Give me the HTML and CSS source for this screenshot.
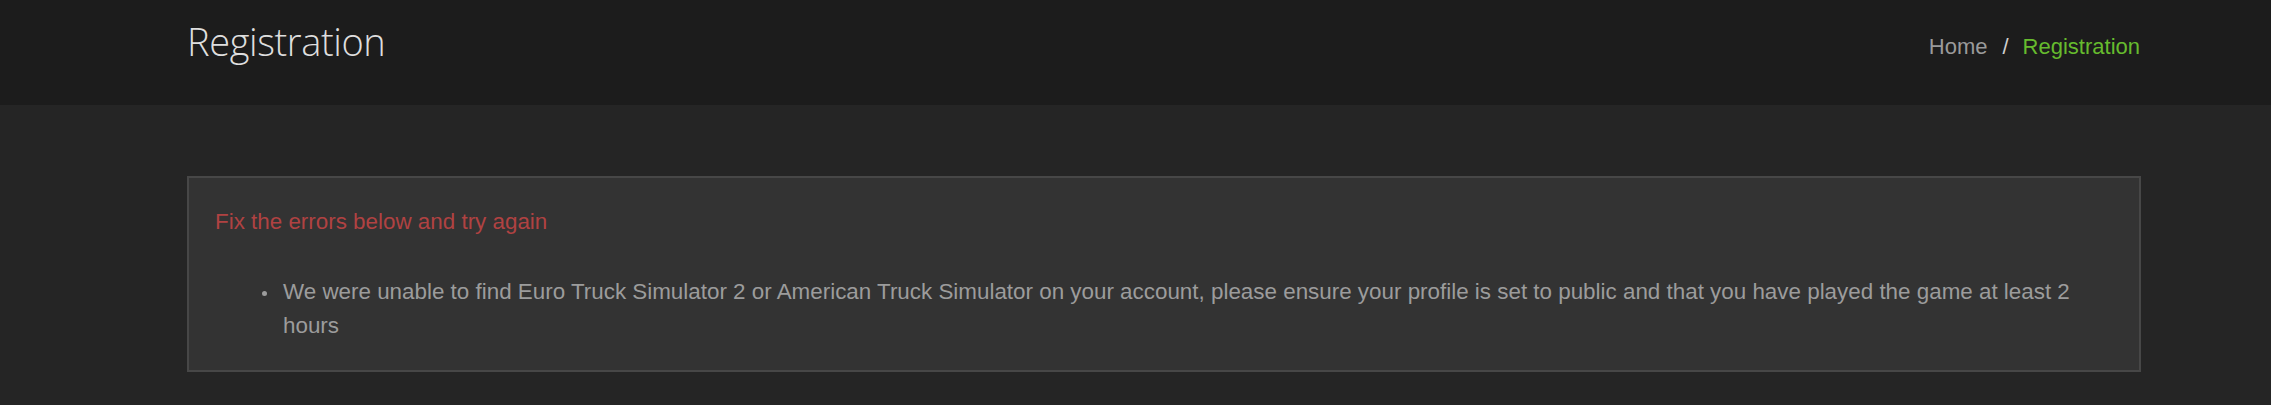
FILE: index.html
```html
<!DOCTYPE html>
<html lang="en">
<head>
    <meta charset="UTF-8">
    <meta name="viewport" content="width=device-width, initial-scale=1.0">
    <title>Registration</title>
    <link rel="stylesheet" href="styles.css">
</head>
<body>

    <!-- Page Header -->
    <header class="page-header">
        <h1>Registration</h1>
        <ol class="breadcrumb">
            <li><a href="#">Home</a></li>
            <li class="active">Registration</li>
        </ol>
    </header>

    <!-- Errors -->
    <main class="content">
        <div class="error-box">
            <p class="error-title">Fix the errors below and try again</p>
            <ul class="error-list">
                <li>We were unable to find Euro Truck Simulator 2 or American Truck Simulator on your account, please ensure your profile is set to public and that you have played the game at least 2 hours</li>
            </ul>
        </div>
    </main>

</body>
</html>
```

FILE: styles.css
```css
body {
    font-family: "Liberation Sans", Arial, sans-serif;
    margin: 0;
    background-color: #252525;
    color: #999;
}
.page-header {
    background-color: #1c1c1c;
    height: 105px;
    box-sizing: border-box;
    padding: 0 131px 0 187px;
    display: flex;
    justify-content: space-between;
    align-items: flex-start;
}
.page-header h1 {
    font-family: "Open Sans", sans-serif;
    font-weight: 300;
    font-size: 38px;
    letter-spacing: -0.4px;
    line-height: 54px;
    margin: 0;
    padding-top: 14px;
    color: #dedede;
}
.breadcrumb {
    list-style: none;
    margin: 0;
    padding: 34px 0 0 0;
    display: flex;
    font-size: 22px;
    line-height: 25px;
}
.breadcrumb a {
    color: #9a9a9a;
    text-decoration: none;
}
.breadcrumb li + li::before {
    content: "/";
    color: #cfcfcf;
    padding: 0 14px 0 15px;
}
.breadcrumb .active {
    color: #66bb2e;
}
.content {
    padding: 71px 130px 0 187px;
}
.error-box {
    background-color: #333;
    border: 2px solid #474747;
    padding: 31px 26px 27px 26px;
    font-size: 22.4px;
}
.error-title {
    margin: 0;
    line-height: 25px;
    color: #b04242;
}
.error-list {
    list-style: none;
    margin: 41px 0 0 0;
    padding: 0 0 0 68px;
    line-height: 34px;
    color: #9c9c9c;
}
.error-list li {
    position: relative;
}
.error-list li::before {
    content: "";
    position: absolute;
    left: -21px;
    top: 16px;
    width: 5px;
    height: 5px;
    border-radius: 50%;
    background-color: #9c9c9c;
}
```
